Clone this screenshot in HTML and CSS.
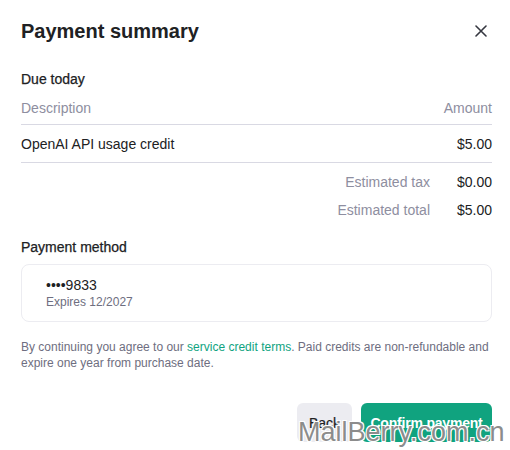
FILE: index.html
```html
<!DOCTYPE html>
<html>
<head>
<meta charset="utf-8">
<link rel="stylesheet" href="styles.css">
</head>
<body>
<div class="modal">
  <div class="header">
    <h1 class="title">Payment summary</h1>
    <button class="close" aria-label="Close">
      <svg width="12" height="12" viewBox="0 0 12 12"><path d="M1 1L11 11M11 1L1 11" stroke="#353740" stroke-width="1.6" stroke-linecap="round"/></svg>
    </button>
  </div>

  <div class="section-label due">Due today</div>
  <div class="row head">
    <span>Description</span><span>Amount</span>
  </div>
  <div class="row item">
    <span>OpenAI API usage credit</span><span>$5.00</span>
  </div>
  <div class="totals">
    <div class="trow"><span class="tlabel">Estimated tax</span><span class="tval">$0.00</span></div>
    <div class="trow"><span class="tlabel">Estimated total</span><span class="tval">$5.00</span></div>
  </div>

  <div class="section-label pm">Payment method</div>
  <div class="card">
    <div class="card-num">••••9833</div>
    <div class="card-exp">Expires 12/2027</div>
  </div>

  <p class="terms">By continuing you agree to our <a class="link" href="#">service credit terms</a>. Paid credits are non-refundable and expire one year from purchase date.</p>

  <div class="actions">
    <button class="btn back">Back</button>
    <button class="btn confirm">Confirm payment</button>
  </div>
</div>
<div class="watermark">MailBerry.com.cn</div>
</body>
</html>
```
FILE: styles.css
```css
* { box-sizing: border-box; }
html, body { margin: 0; padding: 0; background: #fff; }
body {
  font-family: "Liberation Sans", Arial, sans-serif;
  color: #202123;
  width: 510px;
  height: 450px;
  overflow: hidden;
  position: relative;
}
.modal {
  padding: 17px 18px 0 21px;
}
.header {
  display: flex;
  justify-content: space-between;
  align-items: center;
  height: 28px;
}
.title {
  margin: 0;
  font-size: 20px;
  font-weight: 700;
  color: #202123;
}
.close {
  border: 0;
  background: none;
  padding: 0;
  width: 12px;
  height: 12px;
  margin-right: 5px;
  display: flex;
}
.section-label {
  font-size: 14px;
  font-weight: 400;
  color: #202123;
  line-height: 18px;
  -webkit-text-stroke: 0.25px #202123;
}
.due { margin-top: 25px; }
.row {
  display: flex;
  justify-content: space-between;
  font-size: 14px;
  line-height: 18px;
  border-bottom: 1px solid #d9d9e3;
}
.head {
  color: #8e8ea0;
  padding: 11px 0 7px;
}
.item {
  padding: 10px 0 9px;
  color: #202123;
}
.totals {
  display: flex;
  flex-direction: column;
  align-items: flex-end;
  gap: 10px;
  padding-top: 10px;
}
.trow {
  display: flex;
  font-size: 14px;
  line-height: 18px;
}
.tlabel { color: #8e8ea0; text-align: right; }
.tval { width: 62px; text-align: right; color: #202123; }
.pm { margin-top: 19px; }
.card {
  margin-top: 8px;
  border: 1px solid #ececf1;
  border-radius: 8px;
  padding: 12px 24px 10px;
  height: 58px;
}
.card-num { font-size: 14px; line-height: 17px; color: #202123; }
.card-exp { font-size: 12px; line-height: 16px; color: #6e6e80; }
.terms {
  margin: 17px 0 0;
  font-size: 12px;
  line-height: 16px;
  color: #6e6e80;
}
.link { color: #10a37f; text-decoration: none; }
.actions {
  display: flex;
  justify-content: flex-end;
  gap: 9px;
  margin-top: 32px;
}
.btn {
  font-family: inherit;
  font-size: 14px;
  font-weight: 700;
  border: 0;
  border-radius: 6px;
  height: 39px;
  padding: 0 12px;
}
.back { background: #ececf1; color: #202123; font-weight: 400; -webkit-text-stroke: 0.2px #202123; width: 55px; }
.confirm { background: #10a37f; color: #fff; width: 131px; padding: 0; letter-spacing: -0.2px; }
.watermark {
  position: absolute;
  left: 298px;
  top: 417px;
  font-family: "Liberation Sans", Arial, sans-serif;
  font-size: 27px;
  color: #8c8c8c;
  text-shadow: 1px 1px 0 #fff, -1px -1px 0 #fff, 1px -1px 0 #fff, -1px 1px 0 #fff;
  white-space: nowrap;
}
```
